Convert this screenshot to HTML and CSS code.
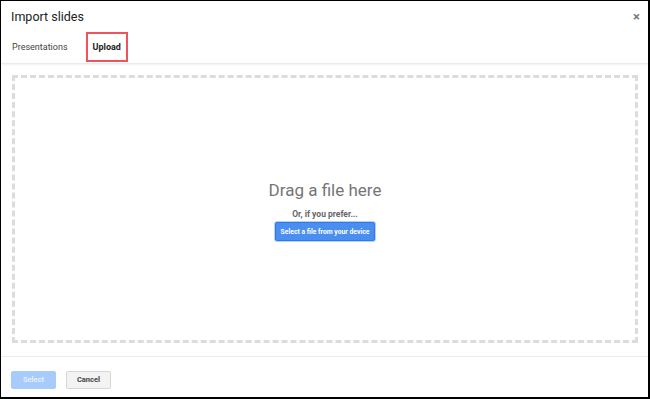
FILE: index.html
```html
<!DOCTYPE html>
<html lang="en">
<head>
    <meta charset="UTF-8">
    <title>Import slides</title>
    <link rel="stylesheet" href="styles.css">
</head>
<body>
<div class="dialog">
    <div class="header">
        <div class="title">Import slides</div>
        <div class="close">×</div>
    </div>
    <div class="tabs">
        <div class="tab">Presentations</div>
        <div class="tab active">Upload</div>
    </div>
    <div class="content">
        <div class="dropzone">
            <div class="drag-text">Drag a file here</div>
            <div class="prefer">Or, if you prefer...</div>
            <button class="btn-blue">Select a file from your device</button>
        </div>
    </div>
    <div class="footer">
        <button class="btn btn-select">Select</button>
        <button class="btn btn-cancel">Cancel</button>
    </div>
</div>
</body>
</html>
```

FILE: styles.css
```css
html, body {
    margin: 0;
    height: 100%;
}
body {
    font-family: Roboto, Arial, sans-serif;
    background: #fff;
}
.dialog {
    box-sizing: border-box;
    width: 650px;
    height: 399px;
    border-top: 1px solid #000;
    border-left: 1px solid #000;
    border-right: 2px solid #000;
    border-bottom: 2px solid #000;
    display: flex;
    flex-direction: column;
}
.header {
    display: flex;
    justify-content: space-between;
    align-items: center;
    height: 30px;
    padding: 0 8px 0 10px;
}
.title {
    font-size: 12.5px;
    color: #222;
    margin-top: 1px;
}
.close {
    font-size: 13px;
    color: #777;
    font-weight: bold;
}
.tabs {
    display: flex;
    align-items: flex-start;
    height: 32px;
    padding-left: 11px;
    border-bottom: 1px solid #ebebeb;
    box-shadow: 0 1px 2px rgba(0, 0, 0, 0.06);
}
.tab {
    font-size: 9px;
    color: #444;
    display: flex;
    align-items: center;
    height: 30px;
    margin-top: 1px;
    margin-right: 18px;
}
.tab.active {
    box-sizing: border-box;
    font-weight: bold;
    color: #222;
    border: 2px solid #f0535a;
    padding: 0 5px;
    height: 30px;
}
.content {
    flex: 1;
    padding: 11px 10px 13px 11px;
    border-bottom: 1px solid #ebebeb;
}
.dropzone {
    box-sizing: border-box;
    height: 100%;
    border: 3px dashed #dcdcdc;
    display: flex;
    flex-direction: column;
    align-items: center;
    justify-content: center;
    padding-top: 3px;
}
.drag-text {
    font-size: 17px;
    color: #757575;
}
.prefer {
    font-size: 8.5px;
    font-weight: bold;
    color: #666;
    margin-top: 9px;
}
.btn-blue {
    margin-top: 3px;
    background: #4a8fef;
    border: 1px solid #3079ed;
    box-shadow: 0 0 0 1px #b7d2f8;
    color: #fff;
    font-family: Roboto, Arial, sans-serif;
    font-size: 6.8px;
    font-weight: bold;
    height: 19px;
    padding: 0 5px;
    border-radius: 2px;
}
.footer {
    height: 40px;
    display: flex;
    align-items: center;
    padding-left: 10px;
    padding-top: 5px;
    box-sizing: border-box;
    gap: 10px;
}
.btn {
    font-family: Roboto, Arial, sans-serif;
    font-size: 7.5px;
    font-weight: bold;
    width: 45px;
    height: 18px;
    border-radius: 2px;
    padding: 0;
}
.btn-select {
    background: #a7cbfa;
    border: 1px solid #a7cbfa;
    color: #e6f0fe;
}
.btn-cancel {
    background: #f3f3f3;
    border: 1px solid #d6d6d6;
    color: #444;
}
```
